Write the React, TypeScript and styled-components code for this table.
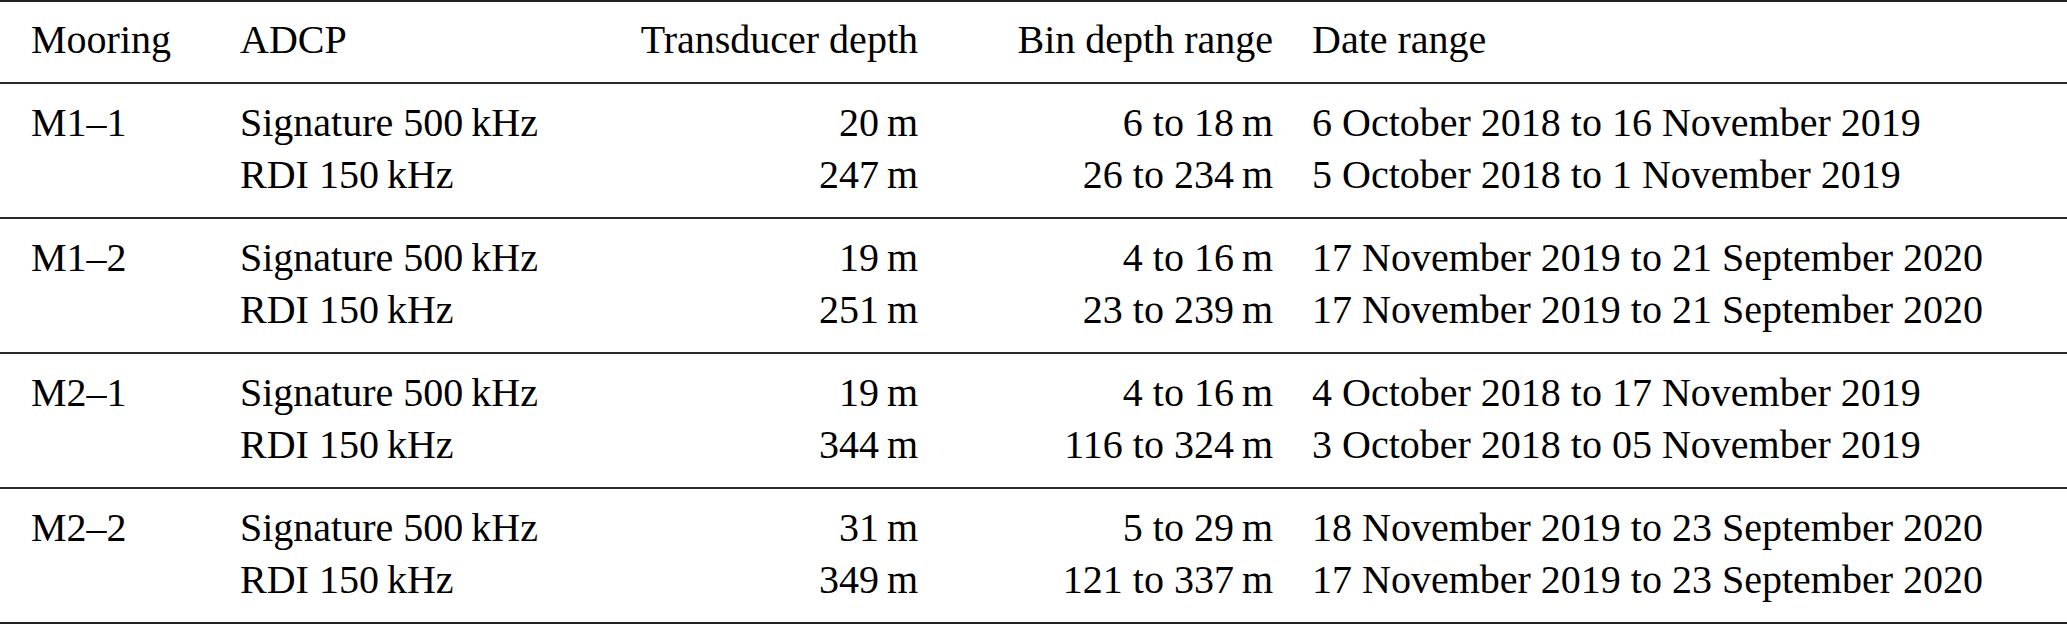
import React from "react";
import styled, { createGlobalStyle } from "styled-components";

const GlobalStyle = createGlobalStyle`
  html, body {
    margin: 0;
    padding: 0;
    background: #ffffff;
  }
  body {
    font-family: "Liberation Serif", "Times New Roman", serif;
    color: #000000;
  }
`;

const Table = styled.div`
  width: 2067px;
  border-top: 2px solid #222;
  border-bottom: 2px solid #222;
  font-size: 40px;
`;

// one band of the table: the header, or one mooring with its two instruments
const Section = styled.div<{ $head?: boolean }>`
  display: grid;
  grid-template-columns: 209px 330px 348px 355px 1fr;
  padding: ${(p) => (p.$head ? "12px 0 16px 31px" : "13px 0 17px 31px")};
  line-height: ${(p) => (p.$head ? "52px" : "51.5px")};
  border-bottom: 2px solid #2a2a2a;

  &:last-child {
    border-bottom: none;
  }
`;

const Cell = styled.div<{ $right?: boolean; $date?: boolean }>`
  white-space: nowrap;
  text-align: ${(p) => (p.$right ? "right" : "left")};
  padding-left: ${(p) => (p.$date ? "39px" : "0")};
`;

type Instrument = {
  adcp: string;
  depth: string;
  bins: string;
  dates: string;
};

type Mooring = {
  name: string;
  rows: Instrument[];
};

const T = "\u2009";

const moorings: Mooring[] = [
  {
    name: "M1–1",
    rows: [
      { adcp: `Signature 500${T}kHz`, depth: `20${T}m`, bins: `6 to 18${T}m`, dates: "6 October 2018 to 16 November 2019" },
      { adcp: `RDI 150${T}kHz`, depth: `247${T}m`, bins: `26 to 234${T}m`, dates: "5 October 2018 to 1 November 2019" },
    ],
  },
  {
    name: "M1–2",
    rows: [
      { adcp: `Signature 500${T}kHz`, depth: `19${T}m`, bins: `4 to 16${T}m`, dates: "17 November 2019 to 21 September 2020" },
      { adcp: `RDI 150${T}kHz`, depth: `251${T}m`, bins: `23 to 239${T}m`, dates: "17 November 2019 to 21 September 2020" },
    ],
  },
  {
    name: "M2–1",
    rows: [
      { adcp: `Signature 500${T}kHz`, depth: `19${T}m`, bins: `4 to 16${T}m`, dates: "4 October 2018 to 17 November 2019" },
      { adcp: `RDI 150${T}kHz`, depth: `344${T}m`, bins: `116 to 324${T}m`, dates: "3 October 2018 to 05 November 2019" },
    ],
  },
  {
    name: "M2–2",
    rows: [
      { adcp: `Signature 500${T}kHz`, depth: `31${T}m`, bins: `5 to 29${T}m`, dates: "18 November 2019 to 23 September 2020" },
      { adcp: `RDI 150${T}kHz`, depth: `349${T}m`, bins: `121 to 337${T}m`, dates: "17 November 2019 to 23 September 2020" },
    ],
  },
];

export default function App() {
  return (
    <>
      <GlobalStyle />
      <Table>
        <Section $head>
          <Cell>Mooring</Cell>
          <Cell>ADCP</Cell>
          <Cell $right>Transducer depth</Cell>
          <Cell $right>Bin depth range</Cell>
          <Cell $date>Date range</Cell>
        </Section>
        {moorings.map((m) => (
          <Section key={m.name}>
            {m.rows.map((r, i) => (
              <React.Fragment key={i}>
                <Cell>{i === 0 ? m.name : ""}</Cell>
                <Cell>{r.adcp}</Cell>
                <Cell $right>{r.depth}</Cell>
                <Cell $right>{r.bins}</Cell>
                <Cell $date>{r.dates}</Cell>
              </React.Fragment>
            ))}
          </Section>
        ))}
      </Table>
    </>
  );
}
